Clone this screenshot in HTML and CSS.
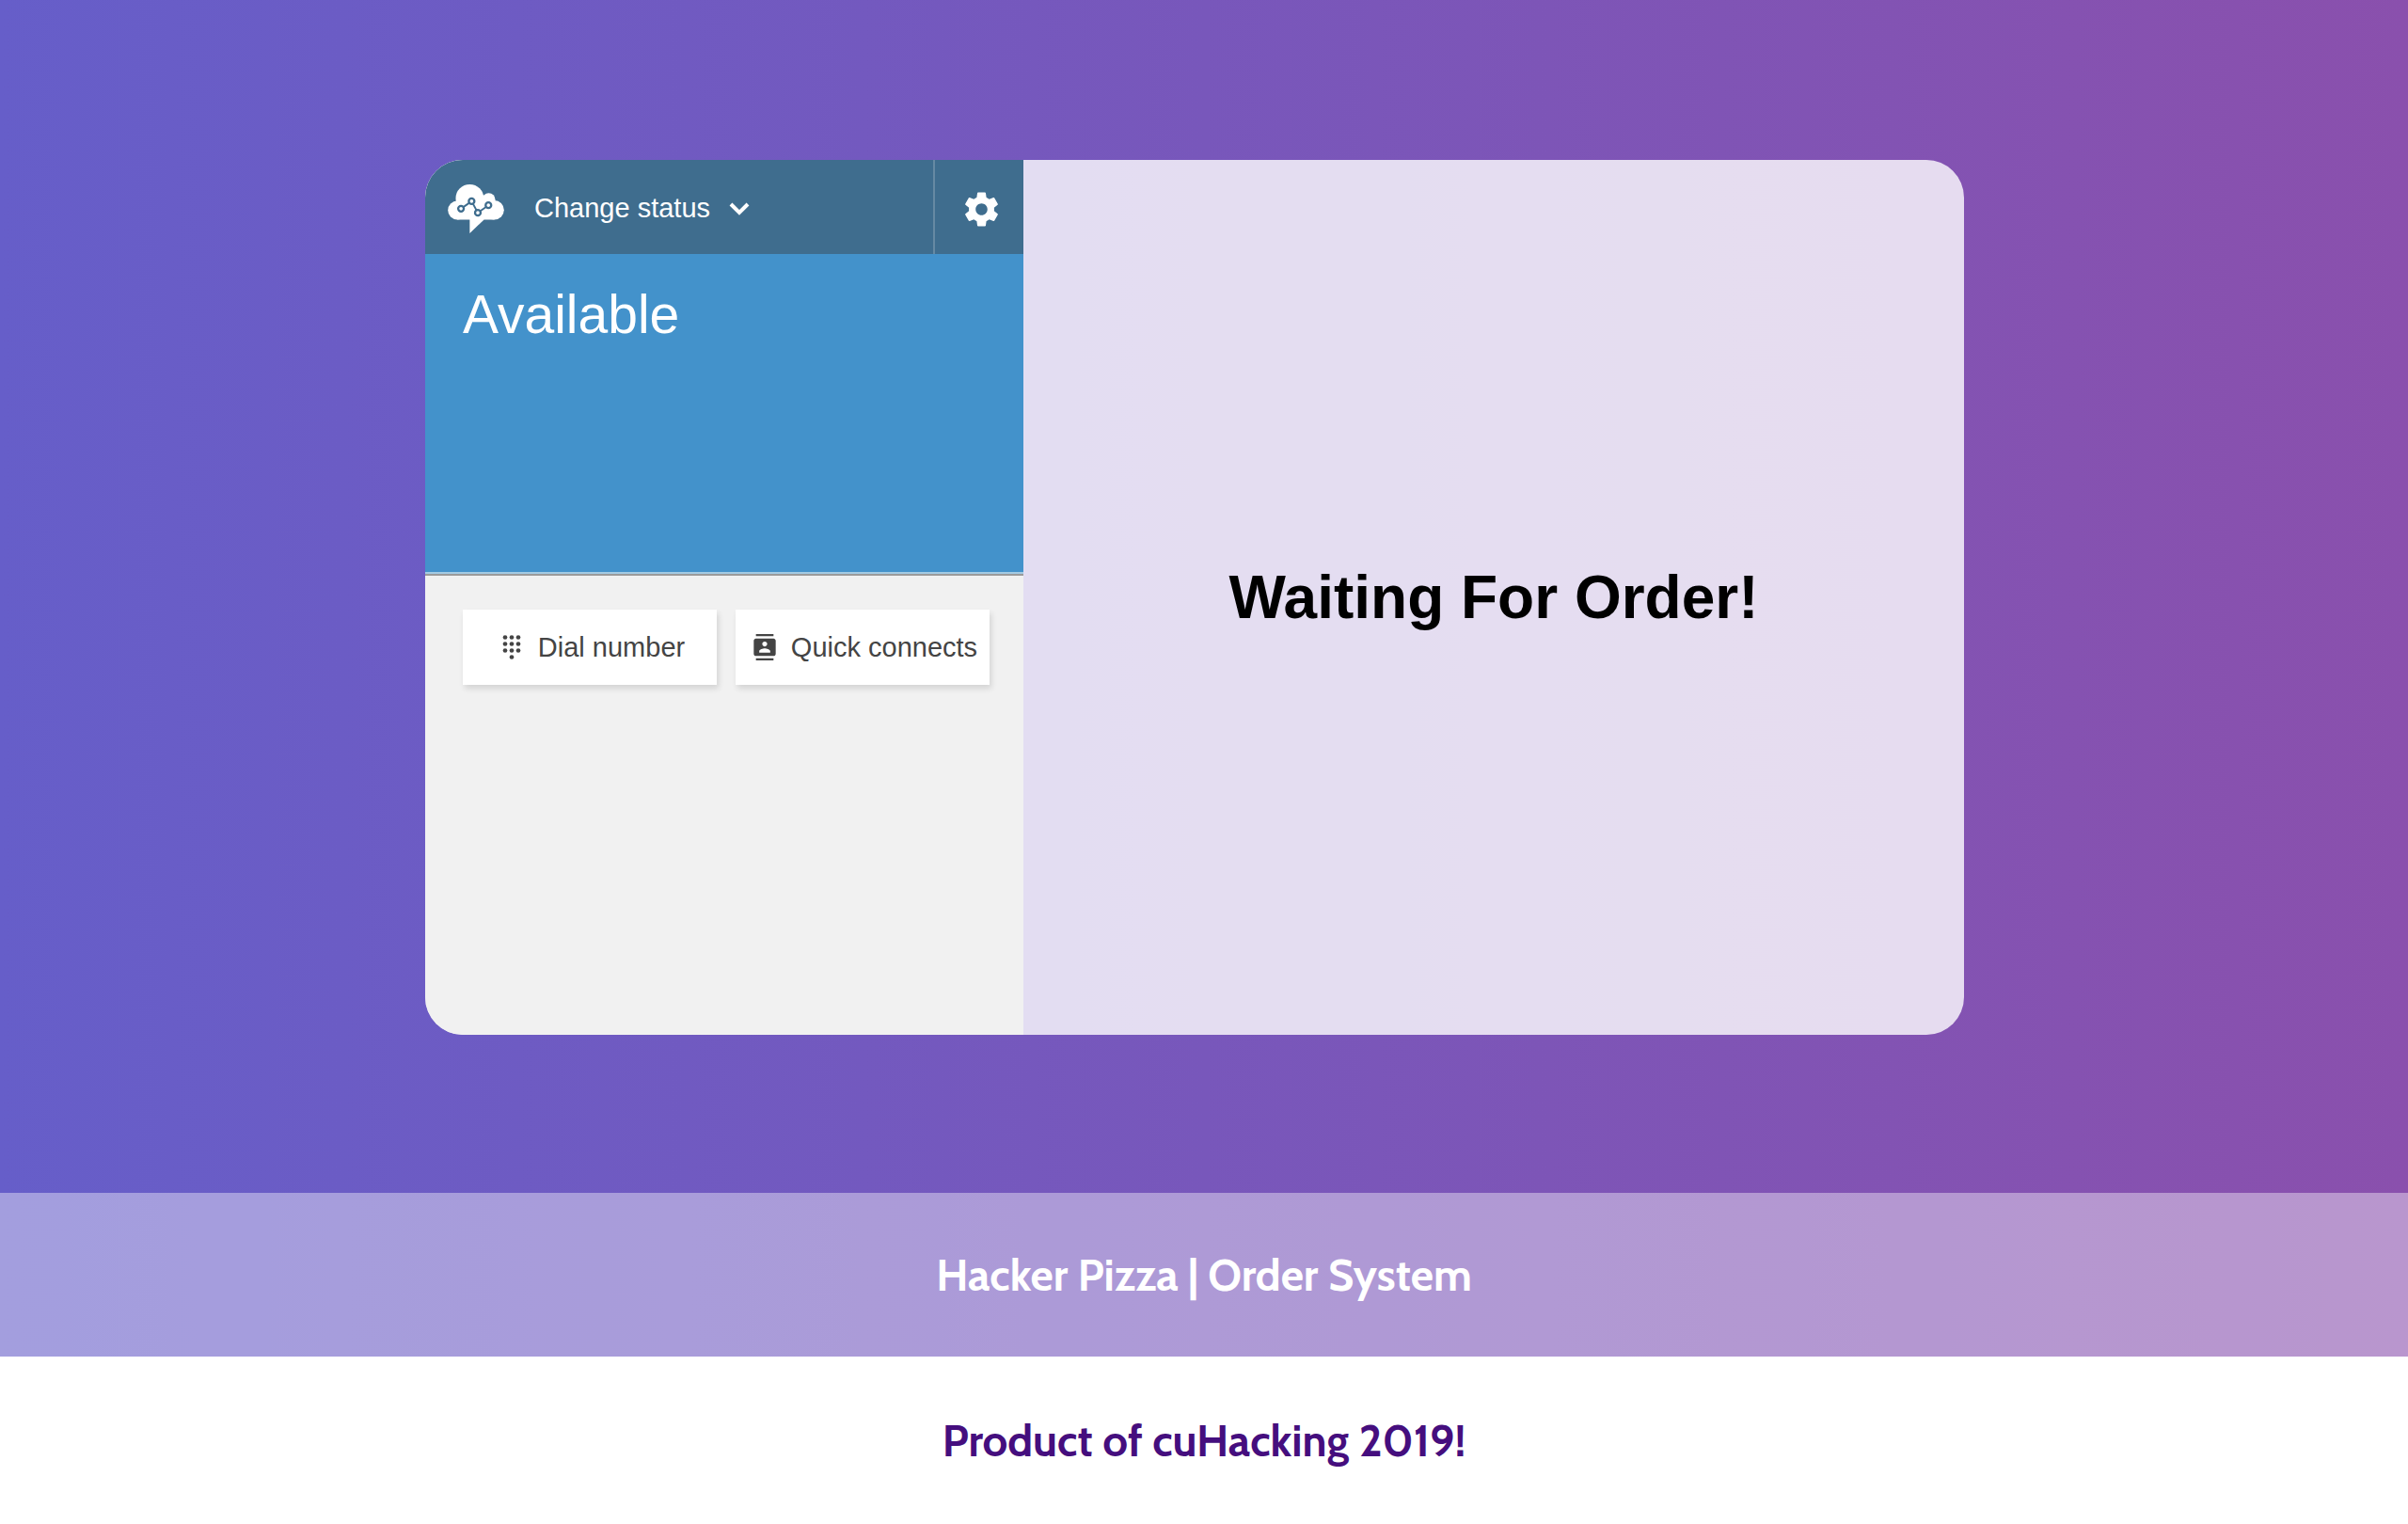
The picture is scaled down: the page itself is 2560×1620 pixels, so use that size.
FILE: index.html
```html
<!DOCTYPE html>
<html lang="en">
<head>
    <meta charset="UTF-8">
    <meta name="viewport" content="width=device-width, initial-scale=1.0">
    <title>Hacker Pizza</title>
    <link rel="stylesheet" href="styles.css">
</head>
<body>
    <main class="main">
        <div class="card">
            <section class="phone">
                <header class="phone-header">
                    <svg class="logo" viewBox="18 47 180 157" aria-hidden="true">
                        <g fill="#fff">
                            <circle cx="48" cy="130" r="30"/>
                            <circle cx="88" cy="92" r="45"/>
                            <circle cx="149" cy="96" r="21"/>
                            <circle cx="167" cy="129" r="31"/>
                            <path d="M48 95h119v65h-33l-46 44v-44H48z"/>
                        </g>
                        <g fill="#fff" stroke="#3f6d8e" stroke-width="7">
                            <path fill="none" stroke-width="6" d="M60 125l34-24 20 37 34-24"/>
                            <circle cx="60" cy="125" r="9"/>
                            <circle cx="94" cy="101" r="9"/>
                            <circle cx="114" cy="138" r="9"/>
                            <circle cx="148" cy="114" r="9"/>
                        </g>
                    </svg>
                    <button type="button" class="status-button">
                        Change status
                        <svg class="chevron" viewBox="0 0 22 14" aria-hidden="true">
                            <path d="M2 2l9 9 9-9" fill="none" stroke="#fff" stroke-width="4"/>
                        </svg>
                    </button>
                    <button type="button" class="settings-button" aria-label="Settings">
                        <svg class="gear" viewBox="0 0 24 24" aria-hidden="true">
                            <path fill="#fff" d="M19.43 12.98c.04-.32.07-.64.07-.98s-.03-.66-.07-.98l2.11-1.65c.19-.15.24-.42.12-.64l-2-3.46c-.12-.22-.39-.3-.61-.22l-2.49 1c-.52-.4-1.08-.73-1.69-.98l-.38-2.65C14.46 2.18 14.25 2 14 2h-4c-.25 0-.46.18-.49.42l-.38 2.65c-.61.25-1.17.59-1.69.98l-2.49-1c-.23-.09-.49 0-.61.22l-2 3.46c-.13.22-.07.49.12.64l2.11 1.65c-.04.32-.07.65-.07.98s.03.66.07.98l-2.11 1.65c-.19.15-.24.42-.12.64l2 3.46c.12.22.39.3.61.22l2.49-1c.52.4 1.08.73 1.69.98l.38 2.65c.03.24.24.42.49.42h4c.25 0 .46-.18.49-.42l.38-2.65c.61-.25 1.17-.59 1.69-.98l2.49 1c.23.09.49 0 .61-.22l2-3.46c.12-.22.07-.49-.12-.64l-2.11-1.65zM12 15.5c-1.93 0-3.5-1.57-3.5-3.5s1.57-3.5 3.5-3.5 3.5 1.57 3.5 3.5-1.57 3.5-3.5 3.5z"/>
                        </svg>
                    </button>
                </header>
                <div class="status">Available</div>
                <div class="actions">
                    <button type="button" class="action">
                        <svg class="action-icon" viewBox="0 0 24 24" aria-hidden="true">
                            <g fill="#444">
                                <circle cx="6" cy="3" r="2"/>
                                <circle cx="12" cy="3" r="2"/>
                                <circle cx="18" cy="3" r="2"/>
                                <circle cx="6" cy="9" r="2"/>
                                <circle cx="12" cy="9" r="2"/>
                                <circle cx="18" cy="9" r="2"/>
                                <circle cx="6" cy="15" r="2"/>
                                <circle cx="12" cy="15" r="2"/>
                                <circle cx="18" cy="15" r="2"/>
                                <circle cx="12" cy="21" r="2"/>
                            </g>
                        </svg>
                        Dial number
                    </button>
                    <button type="button" class="action">
                        <svg class="action-icon" viewBox="0 0 24 24" aria-hidden="true">
                            <path fill="#444" d="M20 0H4v2h16V0zM4 24h16v-2H4v2zM20 4H4c-1.1 0-2 .9-2 2v12c0 1.1.9 2 2 2h16c1.1 0 2-.9 2-2V6c0-1.1-.9-2-2-2zm-8 2.75c1.24 0 2.25 1.01 2.25 2.25s-1.01 2.25-2.25 2.25S9.75 10.24 9.75 9 10.76 6.75 12 6.75zM17 17H7v-1.5c0-1.67 3.33-2.5 5-2.5s5 .83 5 2.5V17z"/>
                        </svg>
                        Quick connects
                    </button>
                </div>
            </section>
            <section class="order">
                <h1 class="order-title">Waiting For Order!</h1>
            </section>
        </div>
    </main>
    <div class="banner">
        <h2 class="banner-title">Hacker Pizza | Order System</h2>
    </div>
    <footer class="footer">
        <p class="footer-text">Product of cuHacking 2019!</p>
    </footer>
</body>
</html>
```
FILE: styles.css
```css
* {
    box-sizing: border-box;
}
body {
    display: flex;
    flex-direction: column;
    min-height: 100vh;
    margin: 0;
    font-family: "Liberation Sans", Arial, sans-serif;
    background: linear-gradient(90deg, #665ec9, #8a50ad);
}
button {
    margin: 0;
    padding: 0;
    border: none;
    background: none;
    font-family: inherit;
    cursor: pointer;
}
svg {
    display: block;
    flex: none;
}
.main {
    display: flex;
    flex: 1;
    padding: 170px 472px 168px 452px;
}
.card {
    display: flex;
    flex: 1;
    border-radius: 40px;
    overflow: hidden;
    background-color: rgba(255, 255, 255, 0.8);
}

/* call panel */
.phone {
    width: 636px;
    background-color: #f1f1f1;
}
.phone-header {
    display: flex;
    align-items: center;
    height: 100px;
    padding-left: 24px;
    background-color: #3f6d8e;
}
.logo {
    width: 60px;
    height: 52px;
    margin-top: 4px;
}
.status-button {
    display: flex;
    align-items: center;
    gap: 20px;
    margin-left: 32px;
    padding-top: 2px;
    font-size: 29px;
    color: #fff;
}
.chevron {
    width: 22px;
    height: 14px;
    margin-top: 2px;
}
.settings-button {
    display: flex;
    align-items: center;
    justify-content: center;
    align-self: stretch;
    width: 96px;
    margin-left: auto;
    padding: 4px 0 0 4px;
    border-left: 2px solid #6689a3;
}
.gear {
    width: 43px;
    height: 43px;
}
.status {
    height: 340px;
    padding: 32px 40px;
    border-bottom: 2px solid #a4cbe3;
    background-color: #4392cb;
    font-size: 57px;
    line-height: 64px;
    color: #fff;
}
.actions {
    display: grid;
    grid-template-columns: 1fr 1fr;
    gap: 20px;
    padding: 36px 36px 0 40px;
    border-top: 2px solid #9b9b9b;
}
.action {
    display: flex;
    align-items: center;
    justify-content: center;
    gap: 14px;
    height: 80px;
    padding-left: 4px;
    background-color: #fff;
    box-shadow: 2px 4px 6px rgba(0, 0, 0, 0.12);
    font-size: 29px;
    white-space: nowrap;
    color: #444;
}
.action-icon {
    width: 28px;
    height: 28px;
}

/* order panel */
.order {
    display: flex;
    flex: 1;
    align-items: center;
    justify-content: center;
}
.order-title {
    margin: 0;
    font-size: 64px;
    color: #000;
}

.banner,
.footer {
    display: flex;
    align-items: center;
    justify-content: center;
    font-family: Cabin, Lato, "Open Sans", sans-serif;
    font-size: 47px;
    font-weight: bold;
}
.banner {
    height: 174px;
    background-color: rgba(255, 255, 255, 0.4);
    color: #fff;
}
.banner-title {
    margin: 0;
    font-size: inherit;
}
.footer {
    height: 178px;
    background-color: #fff;
    color: #450e7e;
}
.footer-text {
    margin: 0;
}
```
